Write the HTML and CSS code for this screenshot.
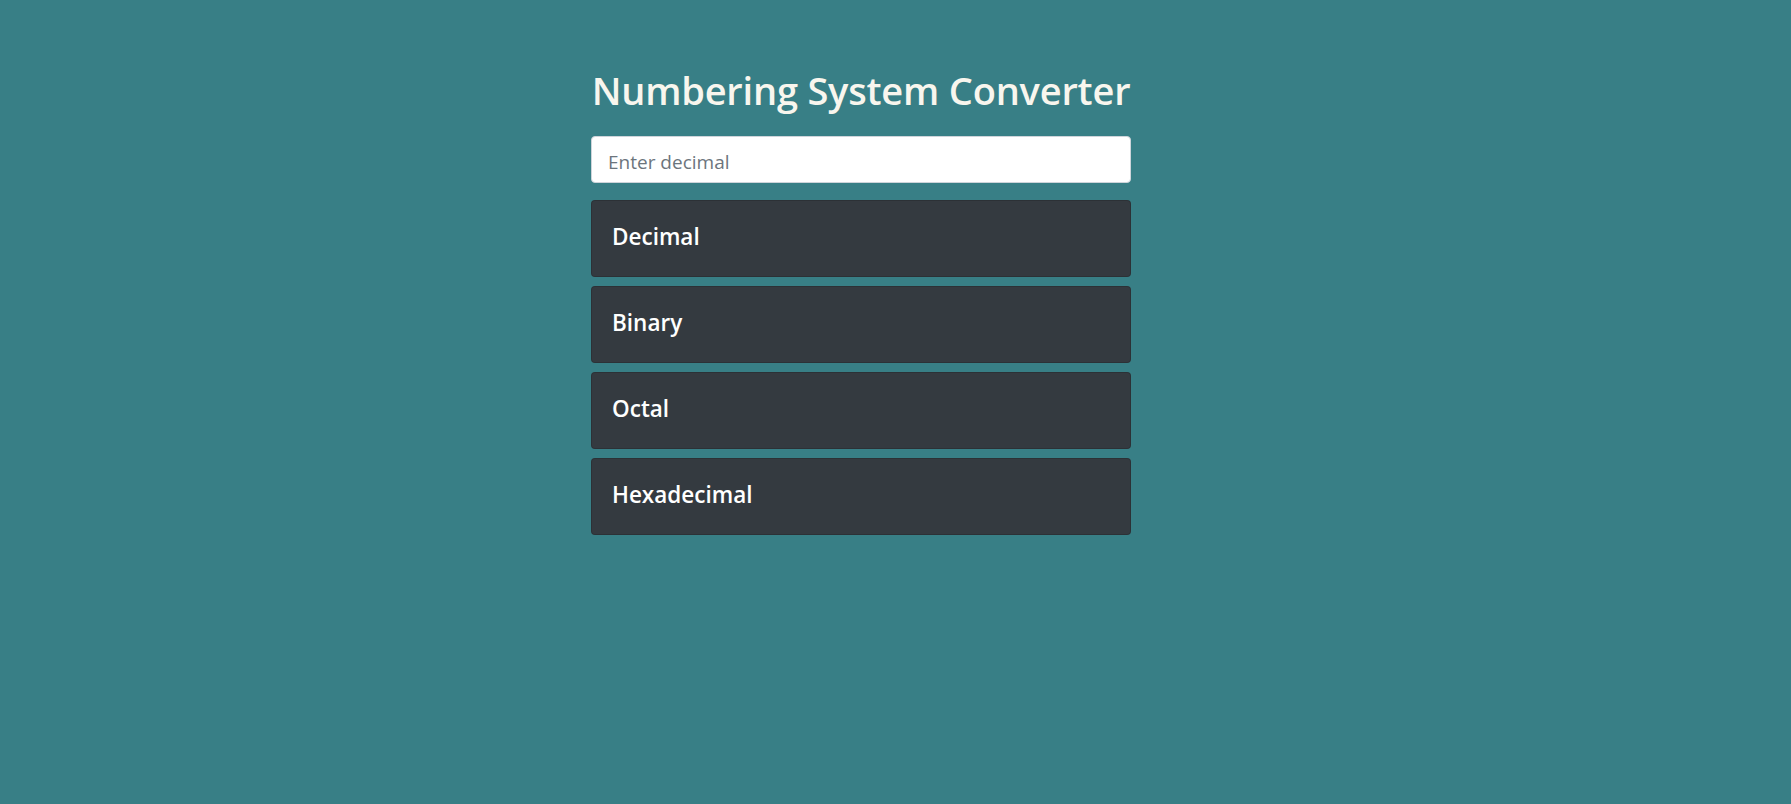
FILE: index.html
```html
<!DOCTYPE html>
<html lang="en">
<head>
<meta charset="utf-8">
<title>Numbering System Converter</title>
<link rel="stylesheet" href="styles.css">
</head>
<body>
<main class="page">
  <section class="converter">
    <h1 class="title">Numbering System Converter</h1>
    <input class="input" type="text" placeholder="Enter decimal">
    <div class="cards">
      <div class="card"><h5 class="card-title">Decimal</h5></div>
      <div class="card"><h5 class="card-title">Binary</h5></div>
      <div class="card"><h5 class="card-title">Octal</h5></div>
      <div class="card"><h5 class="card-title">Hexadecimal</h5></div>
    </div>
  </section>
</main>
</body>
</html>
```

FILE: styles.css
```css
* { box-sizing: border-box; }
html, body {
  margin: 0;
  height: 100%;
}
body {
  background: #387f86;
  font-family: "Open Sans", "Noto Sans", sans-serif;
}
.page {
  min-height: 100%;
  padding: 66px 0 0 591px;
}
.converter {
  width: 540px;
  display: flex;
  flex-direction: column;
}
.title {
  margin: 0;
  height: 46px;
  font-size: 38px;
  line-height: 48px;
  font-weight: 600;
  color: #f8f6ee;
  text-align: center;
  white-space: nowrap;
  letter-spacing: -0.2px;
}
.input {
  margin: 24px 0 17px;
  height: 47px;
  width: 100%;
  padding: 9px 16px 5px;
  font-family: inherit;
  font-size: 19px;
  line-height: 30px;
  color: #495057;
  background: #fff;
  border: 1px solid #ced4da;
  border-radius: 4px;
  outline: none;
}
.input::placeholder { color: #6c757d; }
.cards {
  display: flex;
  flex-direction: column;
  gap: 9px;
}
.card {
  height: 77px;
  background: #343a40;
  border: 1px solid rgba(0,0,0,0.15);
  border-radius: 4px;
  padding: 23px 20px 0;
}
.card-title {
  margin: 0;
  font-size: 22.5px;
  line-height: 26px;
  font-weight: 600;
  color: #fff;
}
```
